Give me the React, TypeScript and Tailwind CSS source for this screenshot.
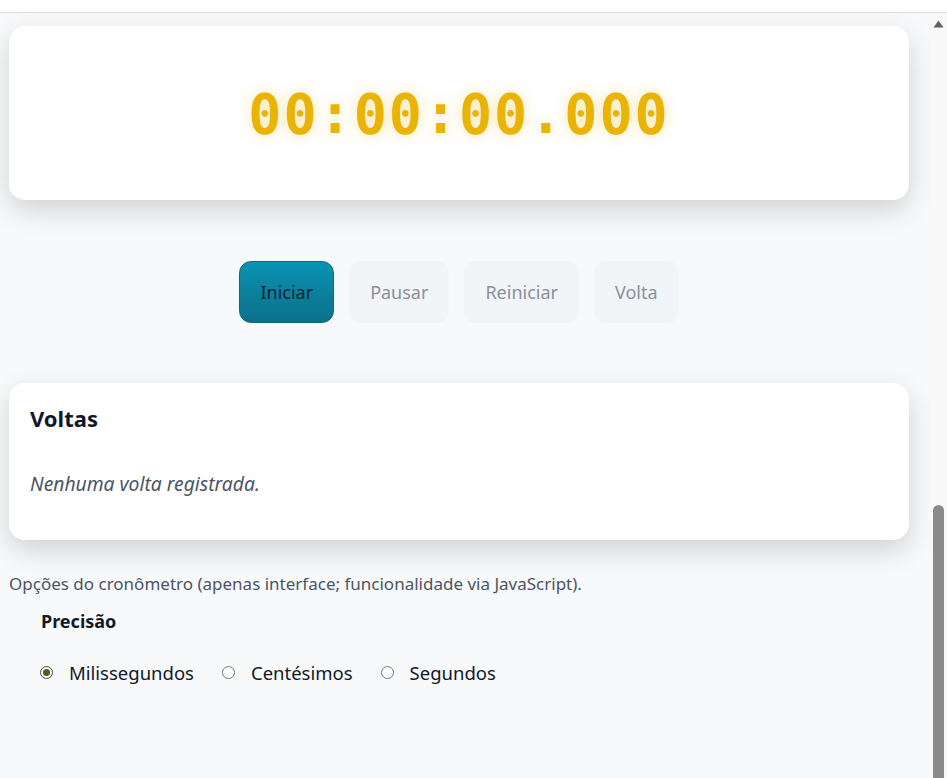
import React from "react";

const sans = { fontFamily: '"Noto Sans", "Open Sans", sans-serif' };

function Radio({ checked, label }: { checked?: boolean; label: string }) {
  return (
    <label className="flex items-center gap-[16px]">
      <span
        className={
          checked
            ? "flex h-[13px] w-[13px] items-center justify-center rounded-full border border-[#4a4a2a] bg-white"
            : "flex h-[13px] w-[13px] items-center justify-center rounded-full border border-[#767676] bg-white"
        }
      >
        {checked ? <span className="h-[7px] w-[7px] rounded-full bg-[#5b5722]" /> : null}
      </span>
      <span className="text-[18.5px] text-[#111827]">{label}</span>
    </label>
  );
}

export default function App() {
  return (
    <div className="flex h-[778px] w-[947px] flex-col overflow-hidden bg-white" style={sans}>
      <div className="h-[13px] shrink-0 border-b border-[#dedede] bg-white" />
      <div className="flex min-h-0 flex-1">
        <main className="flex-1 bg-[#f8f9fb] pl-[9px] pt-[13px]">
          <div className="flex h-[174px] w-[900px] items-center justify-center rounded-2xl bg-white shadow-[0_10px_28px_rgba(0,0,0,0.16)]">
            <span
              className="mt-[3px] text-[55px] font-bold leading-none tracking-[2px] text-[#eab308]"
              style={{
                fontFamily: '"DejaVu Sans Mono", "Liberation Mono", monospace',
                textShadow: "0 0 14px rgba(234,179,8,0.35)",
              }}
            >
              00:00:00.000
            </span>
          </div>

          <div className="mt-[61px] flex w-[900px] justify-center gap-[15px]">
            <button className="h-[62px] rounded-xl border border-[#0b6a82] bg-gradient-to-b from-[#0993b3] to-[#0c7089] px-[20px] text-[18px] text-[#0b2230]">
              Iniciar
            </button>
            <button className="h-[62px] rounded-xl bg-[#f2f5f8] px-[21px] text-[18px] text-[#8b9199]">
              Pausar
            </button>
            <button className="h-[62px] rounded-xl bg-[#f2f5f8] px-[21px] text-[18px] text-[#8b9199]">
              Reiniciar
            </button>
            <button className="h-[62px] rounded-xl bg-[#f2f5f8] px-[21px] text-[18px] text-[#8b9199]">
              Volta
            </button>
          </div>

          <div className="mt-[60px] h-[157px] w-[900px] rounded-2xl bg-white px-[21px] pt-[21px] shadow-[0_10px_28px_rgba(0,0,0,0.16)]">
            <h2 className="text-[22px] font-bold leading-[28px] text-[#0f172a]">Voltas</h2>
            <p className="mt-[39px] text-[19.3px] italic leading-[26px] text-[#4b5563]">
              Nenhuma volta registrada.
            </p>
          </div>

          <p className="mt-[32px] text-[17px] leading-[24px] text-[#4b5563]">
            Opções do cronômetro (apenas interface; funcionalidade via JavaScript).
          </p>
          <h3 className="mt-[12px] pl-[32px] text-[18px] font-bold leading-[26px] text-[#111827]">Precisão</h3>
          <div className="mt-[25px] flex items-center gap-[28px] pl-[31px]">
            <Radio checked label="Milissegundos" />
            <Radio label="Centésimos" />
            <Radio label="Segundos" />
          </div>
        </main>

        <div className="flex w-[17px] shrink-0 flex-col items-center bg-[#f9f9f9]">
          <svg width="11" height="8" viewBox="0 0 11 8" className="mt-[7px]">
            <path d="M5.5 0.5 L10.5 7.5 L0.5 7.5 Z" fill="#606060" />
          </svg>
          <div className="flex-1" />
          <div className="h-[273px] w-[11px] rounded-t-full bg-[#8a8a8a]" />
        </div>
      </div>
    </div>
  );
}
